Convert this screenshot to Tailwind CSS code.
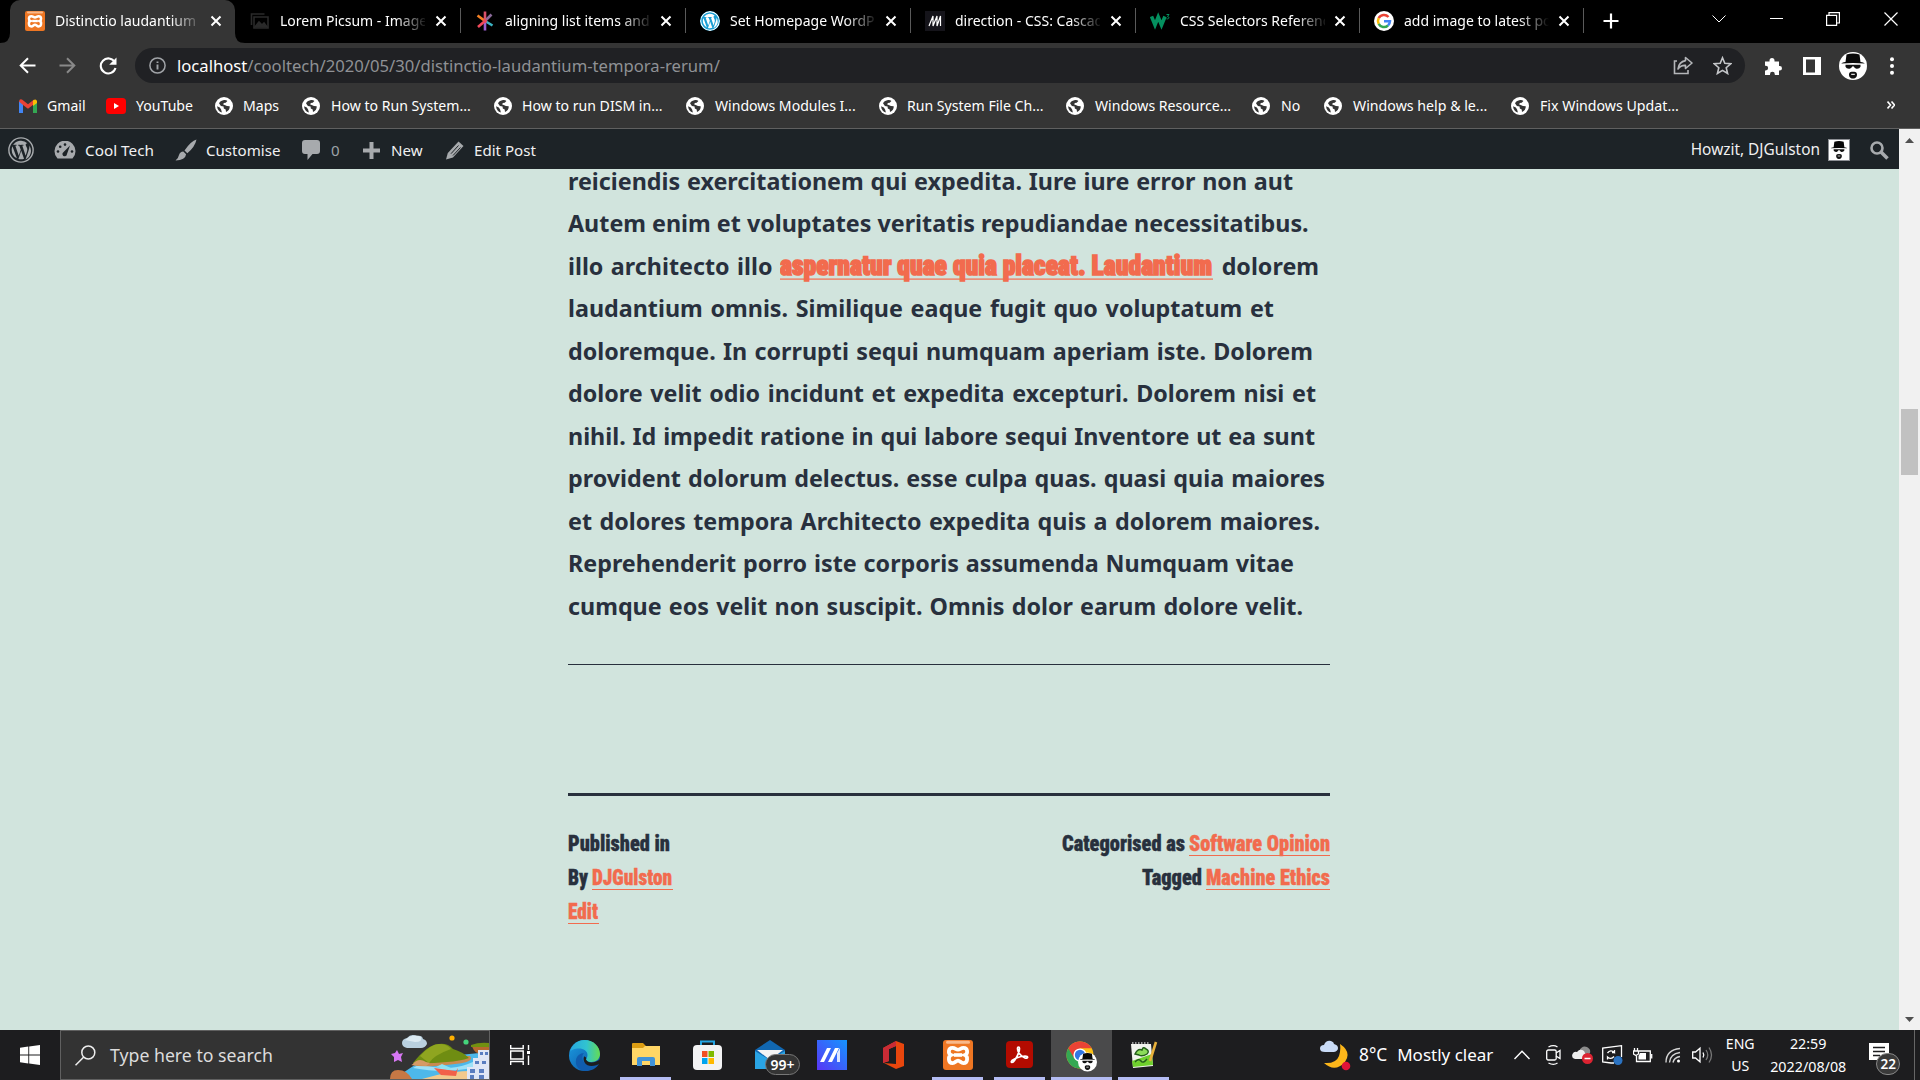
<!DOCTYPE html>
<html lang="en">
<head>
<meta charset="utf-8">
<title>Distinctio laudantium</title>
<script src="https://cdn.jsdelivr.net/npm/@tailwindcss/browser@4"></script>
</head>
<body class="h-[1080px] w-[1920px] overflow-hidden bg-black font-['Noto_Sans','Open_Sans',sans-serif] text-white">
<svg class="hidden">
  <symbol id="globe" viewBox="0 0 18 18"><circle cx="9" cy="9" r="9" fill="#fff"/><path d="M8.200 3.200c1.800-.6 3.200-.2 4.200.8l-1.700 1.700-1.900.3-.6 1.600 1.500.3 2.300 1 2.700.3c.3 2.600-1.200 4.600-3.700 5.700l-.3-2.400-1.900-.9-.2-2.100-2.700-.5L4 6.300c.8-1.700 2.300-2.700 4.200-3.100z" fill="#353535"/><path d="M2.100 9.200l2.700 1.200 1.400 2.400.7 2.600C4 14.700 2.200 12.400 2.100 9.200z" fill="#353535"/></symbol>
  <symbol id="x" viewBox="0 0 12 12"><path d="M1.500 1.500l9 9M10.500 1.500l-9 9" stroke="#fff" stroke-width="2" fill="none"/></symbol>
  <symbol id="xampp" viewBox="0 0 20 20"><rect width="20" height="20" rx="2" fill="#ee7623"/><rect x="2" y=".5" width="16" height="2" rx="1" fill="#f8b88a"/><path d="M6.400 5.200c1.700 0 2.200 1.200 3.600 1.200s1.900-1.200 3.600-1.200c3.200 0 3 4 1.100 4.800 1.900.8 2.100 5.400-1.100 5.400-1.700 0-2.200-1.700-3.600-1.700s-1.900 1.700-3.600 1.700C3.200 15.400 3.400 10.800 5.300 10 3.400 9.200 3.200 5.200 6.400 5.200z" fill="none" stroke="#fff" stroke-width="2.500"/><path d="M7.200 10h5.600" stroke="#fff" stroke-width="2.400"/></symbol>
  <symbol id="wp" viewBox="0 0 24 24"><circle cx="12" cy="12" r="11.200" fill="none" stroke="currentColor" stroke-width="1.300"/><path fill="currentColor" d="M3.400 12c0 3.400 2 6.300 4.800 7.700L4.100 8.500C3.600 9.600 3.400 10.800 3.400 12zm14.400-.4c0-1.100-.4-1.800-.7-2.400-.4-.7-.8-1.300-.8-2 0-.8.600-1.500 1.500-1.500h.1A8.600 8.600 0 0 0 4.800 7.300h.6c.9 0 2.300-.1 2.300-.1.5 0 .5.7.1.700 0 0-.5.1-1 .1l3.100 9.400 1.900-5.700L10.400 8l-.9-.1c-.5 0-.4-.7 0-.7 0 0 1.400.1 2.300.1s2.300-.1 2.300-.1c.5 0 .5.700.1.700 0 0-.5.1-1 .1l3.100 9.300.9-2.900c.4-1.200.6-2 .6-2.800zm-5.600 1.200-2.600 7.500a8.600 8.600 0 0 0 5.300-.2l-.1-.1-2.600-7.200zm7.400-4.900.1 1.200c0 1.100-.2 2.400-.9 4l-2.600 7.600A8.600 8.600 0 0 0 19.600 7.900z"/></symbol>
  <symbol id="face" viewBox="0 0 28 28"><path d="M7.500 2.500Q14 .500 20.500 2.500L21.500 10q4 .5 4 1.600Q14 10.500 2.500 11.600q0-1.100 4-1.600z" fill="#080808"/><path d="M6.500 12.800h15v1.900q-1 2.300-4 2-2.200-.4-2.600-2.300h-1.800q-.4 1.900-2.600 2.300-3 .3-4-2z" fill="#111"/><path d="M14 19.800c2.600-.6 4 .7 4 2.600s-1 4.100-4 4.100-4-2.200-4-4.100 1.400-3.200 4-2.600z" fill="#111"/><path d="M12.200 22.400h3.600" stroke="#ddd" stroke-width="1.200"/></symbol>
</svg>

<!-- Tab strip -->
<header class="flex h-[43px] items-start text-[14px]">
  <div class="flex h-[43px] w-[10px] items-end bg-black"><svg class="h-[10px] w-[10px]" viewBox="0 0 10 10"><path d="M10 0v10H0Q10 10 10 0z" fill="#353535"/></svg></div>
  <div class="flex h-[43px] w-[225px] items-center rounded-t-[10px] bg-[#353535] pb-[2px] pl-[15px]">
    <svg class="h-5 w-5"><use href="#xampp"/></svg>
    <span class="ml-[10px] w-[143px] overflow-hidden whitespace-nowrap [mask-image:linear-gradient(to_right,#000_115px,transparent_148px)]">Distinctio laudantium t</span>
    <svg class="ml-[12px] h-3 w-3"><use href="#x"/></svg>
  </div>
  <div class="relative flex h-[43px] w-[226px] items-center pb-[2px] pl-[15px]">
    <svg class="absolute bottom-0 left-0 h-[10px] w-[10px]" viewBox="0 0 10 10"><path d="M0 0v10h10Q0 10 0 0z" fill="#353535"/></svg>
    <svg class="h-5 w-5" viewBox="0 0 20 20" fill="none" stroke="#2a2a2a" stroke-width="1.600"><path d="M4 6h14v11H4zM1.500 14V3h13"/><path d="M5 16l4-5 3 3 2-2 3 4z" fill="#2a2a2a"/></svg>
    <span class="ml-[10px] w-[145px] overflow-hidden whitespace-nowrap [mask-image:linear-gradient(to_right,#000_115px,transparent_148px)]">Lorem Picsum - Images</span>
    <svg class="ml-[10px] h-3 w-3"><use href="#x"/></svg>
    <i class="ml-auto h-[25px] w-px bg-[#5a5a5a]"></i>
  </div>
  <div class="flex h-[43px] w-[225px] items-center pb-[2px] pl-[14px]">
    <svg class="h-5 w-5" viewBox="0 0 20 20" fill="none" stroke-width="2.600"><path d="M10 10V.5" stroke="#d9506a"/><path d="M10 10l6.500-6.500" stroke="#8a6a9a"/><path d="M10 10l7.500 4.500" stroke="#3bb4c4"/><path d="M10 10v9.500" stroke="#9a5fd0"/><path d="M10 10l-7 6" stroke="#f0495a"/><path d="M10 10L2.500 4.500" stroke="#f48024"/><circle cx="10" cy="10" r="2" fill="#e8465e"/></svg>
    <span class="ml-[10px] w-[145px] overflow-hidden whitespace-nowrap [mask-image:linear-gradient(to_right,#000_115px,transparent_148px)]">aligning list items and</span>
    <svg class="ml-[10px] h-3 w-3"><use href="#x"/></svg>
    <i class="ml-auto h-[25px] w-px bg-[#5a5a5a]"></i>
  </div>
  <div class="flex h-[43px] w-[225px] items-center pb-[2px] pl-[14px]">
    <svg class="h-5 w-5 rounded-full bg-[#1a9fd4]"><use href="#wp"/></svg>
    <span class="ml-[10px] w-[145px] overflow-hidden whitespace-nowrap [mask-image:linear-gradient(to_right,#000_115px,transparent_148px)]">Set Homepage WordPress</span>
    <svg class="ml-[10px] h-3 w-3"><use href="#x"/></svg>
    <i class="ml-auto h-[25px] w-px bg-[#5a5a5a]"></i>
  </div>
  <div class="flex h-[43px] w-[225px] items-center pb-[2px] pl-[14px]">
    <svg class="h-5 w-5" viewBox="0 0 20 20"><rect width="20" height="20" fill="#15141a"/><path d="M4 15 8 5v10L12 5v10L15.500 5v10" stroke="#fff" stroke-width="1.200" fill="none"/></svg>
    <span class="ml-[10px] w-[145px] overflow-hidden whitespace-nowrap [mask-image:linear-gradient(to_right,#000_115px,transparent_148px)]">direction - CSS: Cascading</span>
    <svg class="ml-[10px] h-3 w-3"><use href="#x"/></svg>
    <i class="ml-auto h-[25px] w-px bg-[#5a5a5a]"></i>
  </div>
  <div class="flex h-[43px] w-[224px] items-center pb-[2px] pl-[14px]">
    <svg class="h-5 w-5" viewBox="0 0 20 20"><path d="M1.500 5.500 5 14l3.200-8 3.300 8L15 5.500" stroke="#04905f" stroke-width="3.600" fill="none"/><path d="M16.500 3.500h2.500l-1.500 2c2 0 2 3-1 2.300" stroke="#04905f" fill="none"/></svg>
    <span class="ml-[10px] w-[145px] overflow-hidden whitespace-nowrap [mask-image:linear-gradient(to_right,#000_115px,transparent_148px)]">CSS Selectors Reference</span>
    <svg class="ml-[9px] h-3 w-3"><use href="#x"/></svg>
    <i class="ml-auto h-[25px] w-px bg-[#5a5a5a]"></i>
  </div>
  <div class="flex h-[43px] w-[224px] items-center pb-[2px] pl-[14px]">
    <svg class="h-5 w-5" viewBox="0 0 20 20" fill="none" stroke-width="2.500"><circle cx="10" cy="10" r="10" fill="#fff"/><path d="M14.500 6A6 6 0 0 0 4.700 7.200" stroke="#ea4335"/><path d="M4.700 7.200a6 6 0 0 0 0 5.600" stroke="#fbbc05"/><path d="M4.700 12.800a6 6 0 0 0 9.300 1.700" stroke="#34a853"/><path d="M14 14.500a6 6 0 0 0 2-4.200h-6" stroke="#4285f4"/></svg>
    <span class="ml-[10px] w-[145px] overflow-hidden whitespace-nowrap [mask-image:linear-gradient(to_right,#000_115px,transparent_145px)]">add image to latest post</span>
    <svg class="ml-[9px] h-3 w-3"><use href="#x"/></svg>
    <i class="ml-auto h-[25px] w-px bg-[#5a5a5a]"></i>
  </div>
  <svg class="mt-[13px] ml-[19px] h-4 w-4" viewBox="0 0 16 16"><path d="M8 .5v15M.5 8h15" stroke="#fff" stroke-width="2.200"/></svg>
  <svg class="mt-[15px] ml-[93px] h-2 w-[14px]" viewBox="0 0 14 8" fill="none" stroke="#fff"><path d="M.5.500 7 7 13.500.500"/></svg>
  <i class="mt-[18px] ml-[44px] h-px w-[13px] bg-white"></i>
  <svg class="mt-[12px] ml-[43px] h-[14px] w-[14px]" viewBox="0 0 14 14" fill="none" stroke="#fff" stroke-width="1.200"><path d="M.6 3.400h10v10H.6zM3 3V.6h10.400V11H11"/></svg>
  <svg class="mt-[12px] ml-[44px] h-[14px] w-[14px]" viewBox="0 0 14 14" stroke="#fff" stroke-width="1.200"><path d="M.5.500l13 13M13.500.500l-13 13"/></svg>
</header>

<!-- Address row -->
<div class="flex h-[45px] items-center bg-[#353535] pl-[19px]">
  <svg class="h-[17px] w-[17px]" viewBox="0 0 17 17" fill="none" stroke="#fff" stroke-width="2"><path d="M16.500 8.500H2M9 1.200 1.700 8.500 9 15.800"/></svg>
  <svg class="ml-[23px] h-[17px] w-[17px]" viewBox="0 0 17 17" fill="none" stroke="#898989" stroke-width="2"><path d="M.5 8.500H15M8 1.200l7.300 7.300L8 15.800"/></svg>
  <svg class="ml-[23px] h-[18px] w-[18px]" viewBox="0 0 18 18" fill="none" stroke="#fff" stroke-width="2.100"><path d="M15.700 5A7.500 7.500 0 1 0 16.500 11"/><path d="M17.500.500v7.300h-7.300z" fill="#fff" stroke="none"/></svg>
  <div class="ml-[18px] flex h-[35px] w-[1610px] items-center rounded-full bg-[#202124] pl-[14px]">
    <svg class="h-[17px] w-[17px]" viewBox="0 0 17 17" fill="none" stroke="#a0a3a7" stroke-width="1.500"><circle cx="8.500" cy="8.500" r="7.600"/><path d="M8.500 7.500v5M8.500 4.400v1.700" stroke-width="1.900"/></svg>
    <span class="ml-[11px] w-[546px] pt-px text-[16.65px] whitespace-nowrap text-[#8f9195]"><span class="text-white">localhost</span>/cooltech/2020/05/30/distinctio-laudantium-tempora-rerum/</span>
    <svg class="ml-[950px] h-[19px] w-[20px]" viewBox="0 0 20 19" fill="none" stroke="#b4b6b9" stroke-width="1.600"><path d="M4 5H1.500v12.500h13.500V14"/><path d="M12.500 1.500 19 7l-6.500 5.500V9.400Q8 9 5 13q.8-7.200 7.500-8.400z" stroke-linejoin="round"/></svg>
    <svg class="ml-[20px] h-[19px] w-[19px]" viewBox="0 0 19 19" fill="none" stroke="#c4c6c9" stroke-width="1.600"><path d="M9.500 1.800l2.300 5.500 5.900.5-4.500 3.900 1.400 5.800-5.100-3.100-5.100 3.100 1.400-5.800L1.300 7.800l5.900-.5z"/></svg>
  </div>
  <svg class="ml-[19px] h-[18px] w-[18px]" viewBox="0 0 18 18" fill="#fff"><path d="M1 4.500h4.500v-1a2.500 2.500 0 0 1 5 0v1H15V9h.8a2.200 2.200 0 0 1 0 4.400H15V18h-4.200v-.8a2.400 2.400 0 0 0-4.800 0v.8H1v-4.600h.8a2.300 2.300 0 0 0 0-4.600H1z"/></svg>
  <svg class="ml-[21px] h-[18px] w-[18px]" viewBox="0 0 18 18"><path fill="#fff" fill-rule="evenodd" d="M0 0h18v18H0zM3 2.500v13h9v-13z"/></svg>
  <svg class="ml-[18px] h-7 w-7 rounded-full bg-white"><use href="#face"/></svg>
  <svg class="ml-[23px] h-[18px] w-1" viewBox="0 0 4 18" fill="#fff"><circle cx="2" cy="2.200" r="2"/><circle cx="2" cy="9" r="2"/><circle cx="2" cy="15.800" r="2"/></svg>
</div>

<!-- Bookmarks -->
<nav class="flex h-[41px] items-start border-b border-[#606060] bg-[#353535] pt-[8px] pl-[19px] text-[14.1px] leading-[20px] whitespace-nowrap">
  <div class="flex w-[87px] items-center gap-[10px]"><svg class="h-[14px] w-[18px]" viewBox="0 0 18 14"><path d="M0 2v12h4V5z" fill="#4285f4"/><path d="M18 2v12h-4V5z" fill="#34a853"/><path d="M0 2.500Q.5-.5 3 .6L9 5.300 15 .6l-.8 5.200L9 9.800 4 6z" fill="#ea4335"/><path d="M14 1.500Q17-.8 18 2v2L14 7z" fill="#fbbc04"/></svg>Gmail</div>
  <div class="flex w-[109px] items-center gap-[10px]"><svg class="h-4 w-5" viewBox="0 0 20 16"><rect width="20" height="16" rx="3.500" fill="#f00"/><path d="M8 5v6l5-3z" fill="#fff"/></svg>YouTube</div>
  <div class="flex w-[87px] items-center gap-[10px]"><svg class="h-[18px] w-[18px]"><use href="#globe"/></svg>Maps</div>
  <div class="flex w-[192px] items-center gap-[11px]"><svg class="h-[18px] w-[18px]"><use href="#globe"/></svg>How to Run System...</div>
  <div class="flex w-[192px] items-center gap-[10px]"><svg class="h-[18px] w-[18px]"><use href="#globe"/></svg>How to run DISM in...</div>
  <div class="flex w-[193px] items-center gap-[11px]"><svg class="h-[18px] w-[18px]"><use href="#globe"/></svg>Windows Modules I...</div>
  <div class="flex w-[187px] items-center gap-[10px]"><svg class="h-[18px] w-[18px]"><use href="#globe"/></svg>Run System File Ch...</div>
  <div class="flex w-[186px] items-center gap-[11px]"><svg class="h-[18px] w-[18px]"><use href="#globe"/></svg>Windows Resource...</div>
  <div class="flex w-[72px] items-center gap-[11px]"><svg class="h-[18px] w-[18px]"><use href="#globe"/></svg>No</div>
  <div class="flex w-[187px] items-center gap-[11px] text-[14.2px]"><svg class="h-[18px] w-[18px]"><use href="#globe"/></svg>Windows help &amp; le...</div>
  <div class="flex w-[190px] items-center gap-[11px] text-[14.2px]"><svg class="h-[18px] w-[18px]"><use href="#globe"/></svg>Fix Windows Updat...</div>
  <svg class="mt-[5px] ml-[186px] h-2 w-2" viewBox="0 0 8 8" fill="none" stroke="#fff" stroke-width="1.600"><path d="M.5.500 3.500 4 .5 7.500M4.500.500 7.500 4l-3 3.500"/></svg>
</nav>

<div class="flex h-[901px]">
  <div class="flex w-[1899px] flex-col bg-[#d1e4dd]">
    <!-- Admin bar -->
    <div class="flex h-[40px] shrink-0 items-center bg-[#1d2327] pt-[2px] pl-[8px] text-[15.1px] text-[#f0f0f1]">
      <svg class="h-[26px] w-[26px] text-[#a7aaad]"><use href="#wp"/></svg>
      <svg class="ml-[20px] h-[18px] w-[22px]" viewBox="0 0 22 18"><path d="M3.500 17.500A10.500 10.500 0 1 1 18.500 17.500z" fill="#a7aaad"/><g fill="#1d2327"><circle cx="4" cy="10.500" r="1.300"/><circle cx="6.200" cy="5.800" r="1.300"/><circle cx="11" cy="3.600" r="1.300"/><circle cx="18" cy="10.500" r="1.300"/><path d="M16 4.500l-3 8.500a2.300 2.300 0 1 1-3.400-2z"/></g></svg>
      <span class="ml-[9px] w-[90px] text-[15.3px]">Cool Tech</span>
      <svg class="h-[24px] w-[22px]" viewBox="0 0 22 22" fill="#a7aaad"><path d="M21.500.5Q16 2 9.500 11.500l2.800 2.700Q20 8 21.500.5zM8.300 12.500l2.800 2.700Q10.500 21 .5 21.500 3.500 19 4 16q1-3.300 4.300-3.500z"/></svg>
      <span class="ml-[9px] w-[96px]">Customise</span>
      <svg class="h-5 w-[18px]" viewBox="0 0 18 20" fill="#a7aaad"><path d="M3 0h12q3 0 3 3v8q0 3-3 3h-4.500L5.500 20v-6H3q-3 0-3-3V3q0-3 3-3z"/></svg>
      <span class="ml-[11px] w-[32px] text-[#9ca2a7]">0</span>
      <svg class="h-[17px] w-[17px]" viewBox="0 0 17 17"><path d="M8.500 0v17M0 8.500h17" stroke="#a7aaad" stroke-width="4"/></svg>
      <span class="ml-[11px] w-[55px]">New</span>
      <svg class="h-[19px] w-[18px]" viewBox="0 0 18 19"><path d="M12.500.5 17.500 5 7 16.500 0 18.500 1.800 12z" fill="#a7aaad"/><path d="M12.500 4.500 5 12.700M14.500 6.500 7 14.500" stroke="#1d2327" stroke-width="1"/></svg>
      <span class="ml-[10px]">Edit Post</span>
      <span class="ml-auto text-[15.4px]">Howzit, DJGulston</span>
      <svg class="ml-[8px] h-[22px] w-[22px] border border-[#8c8f94] bg-white"><use href="#face"/></svg>
      <svg class="mr-[10px] ml-[20px] h-[19px] w-[19px]" viewBox="0 0 19 19" fill="none" stroke="#a7aaad"><circle cx="7" cy="7" r="5.500" stroke-width="2.600"/><path d="M11 11l6.500 6.500" stroke-width="3.600"/></svg>
    </div>
    <!-- Post -->
    <main class="flex grow flex-col items-center overflow-hidden text-[#28303d]">
      <article class="-mt-[9.5px] mr-[1px] w-[762px] text-[23.3px] leading-[42.5px] font-bold whitespace-nowrap">
        <p class="w-[725px] [text-align-last:justify]">reiciendis exercitationem qui expedita. Iure iure error non aut</p>
        <p class="w-[740px] [text-align-last:justify]">Autem enim et voluptates veritatis repudiandae necessitatibus.</p>
        <div class="flex h-[42.5px] w-[751px]"><span class="w-[204.5px] [text-align-last:justify]">illo architecto illo</span><a class="ml-[7px]"><svg class="h-[42px] w-[433px] font-['Roboto',sans-serif] font-black font-stretch-condensed" fill="#f26b4e"><text x="0" y="30" font-size="27.500" textLength="432" lengthAdjust="spacingAndGlyphs" stroke="#f26b4e" stroke-width="1.600">aspernatur quae quia placeat. Laudantium</text><rect y="33.500" width="433" height="1.200"/></svg></a><span class="ml-auto">dolorem</span></div>
        <p class="w-[706px] [text-align-last:justify]">laudantium omnis. Similique eaque fugit quo voluptatum et</p>
        <p class="w-[745px] [text-align-last:justify]">doloremque. In corrupti sequi numquam aperiam iste. Dolorem</p>
        <p class="w-[748px] [text-align-last:justify]">dolore velit odio incidunt et expedita excepturi. Dolorem nisi et</p>
        <p class="w-[747px] [text-align-last:justify]">nihil. Id impedit ratione in qui labore sequi Inventore ut ea sunt</p>
        <p class="w-[757px] [text-align-last:justify]">provident dolorum delectus. esse culpa quas. quasi quia maiores</p>
        <p class="w-[752px] [text-align-last:justify]">et dolores tempora Architecto expedita quis a dolorem maiores.</p>
        <p class="w-[726px] [text-align-last:justify]">Reprehenderit porro iste corporis assumenda Numquam vitae</p>
        <p class="w-[735px] [text-align-last:justify]">cumque eos velit non suscipit. Omnis dolor earum dolore velit.</p>
        <hr class="mt-[37px] border-t border-[#28303d]">
      </article>
      <footer class="mt-[128px] mr-[1px] flex w-[762px] justify-between border-t-3 border-[#28303d] pt-[32px] font-['Roboto',sans-serif] font-black font-stretch-condensed">
        <div class="flex flex-col">
          <svg class="h-[34px] w-[104px]" fill="#28303d" stroke="#28303d" stroke-width=".4" font-size="22"><text x="0" y="23" textLength="102" lengthAdjust="spacingAndGlyphs">Published in</text></svg>
          <svg class="h-[34px] w-[106px]" fill="#28303d" font-size="22"><text x="0" y="23" textLength="20" lengthAdjust="spacingAndGlyphs" stroke="#28303d" stroke-width=".4">By</text><text x="24" y="23" textLength="80" lengthAdjust="spacingAndGlyphs" fill="#f26b4e" stroke="#f26b4e" stroke-width=".4">DJGulston</text><rect x="24" y="27" width="81" height="1" fill="#f26b4e"/></svg>
          <svg class="h-[34px] w-[106px]" fill="#f26b4e" font-size="22"><text x="0" y="23" textLength="30" lengthAdjust="spacingAndGlyphs" stroke="#f26b4e" stroke-width=".4">Edit</text><rect y="27" width="31" height="1"/></svg>
        </div>
        <div class="flex flex-col">
          <svg class="h-[34px] w-[268px]" fill="#28303d" font-size="22"><text x="0" y="23" textLength="123" lengthAdjust="spacingAndGlyphs" stroke="#28303d" stroke-width=".4">Categorised as</text><text x="127" y="23" textLength="141" lengthAdjust="spacingAndGlyphs" fill="#f26b4e" stroke="#f26b4e" stroke-width=".4">Software Opinion</text><rect x="127" y="27" width="141" height="1" fill="#f26b4e"/></svg>
          <svg class="h-[34px] w-[268px]" fill="#28303d" font-size="22"><text x="80" y="23" textLength="60" lengthAdjust="spacingAndGlyphs" stroke="#28303d" stroke-width=".4">Tagged</text><text x="144" y="23" textLength="124" lengthAdjust="spacingAndGlyphs" fill="#f26b4e" stroke="#f26b4e" stroke-width=".4">Machine Ethics</text><rect x="144" y="27" width="124" height="1" fill="#f26b4e"/></svg>
        </div>
      </footer>
    </main>
  </div>
  <!-- Scrollbar -->
  <div class="flex w-[21px] flex-col items-center bg-[#f1f1f1]">
    <svg class="mt-[9px] h-[5px] w-[9px]" viewBox="0 0 9 5"><path d="M0 5 4.500 0 9 5z" fill="#505050"/></svg>
    <div class="mt-[266px] h-[66px] w-[17px] bg-[#c1c1c1]"></div>
    <svg class="mt-auto mb-[8px] h-[5px] w-[9px]" viewBox="0 0 9 5"><path d="M0 0 4.500 5 9 0z" fill="#505050"/></svg>
  </div>
</div>

<!-- Taskbar -->
<footer class="flex h-[50px] items-center bg-[#1d1d1f]">
  <svg class="ml-[20px] h-5 w-5" viewBox="0 0 20 20" fill="#fff"><path d="M0 2.700 8.300 1.600v8H0zM9.200 1.400 20 0v9.600H9.200zM0 10.400h8.300v8L0 17.300zM9.200 10.400H20V20L9.200 18.600z"/></svg>
  <div class="ml-[20px] flex h-[50px] w-[430px] items-center border border-[#606060] bg-[#333]">
    <svg class="ml-[14px] h-[21px] w-[21px]" viewBox="0 0 21 21" fill="none" stroke="#eee" stroke-width="1.500"><circle cx="13.300" cy="7.500" r="6.500"/><path d="M8.500 12.200.500 20.300"/></svg>
    <span class="ml-[14px] text-[17.7px] text-[#dcdcdc]">Type here to search</span>
    <svg class="ml-auto h-[48px] w-[100px]" viewBox="-1 1 100 48"><path d="M5 49Q25 33 40 28L99 22V49z" fill="#4db8ea"/><path d="M30 34q40 12 68-12v10q-30 14-75 6z" fill="#9ee1f7"/><path d="M32 49q30-10 67-8v8z" fill="#f2c98c"/><path d="M21 35Q50 25 80 26q5 6-15 8-30 4-44 1z" fill="#c98a50"/><path d="M23 33Q38 14 49 14q9-1 14 5 10 3 16 9-9 3-22 4-20 2-34 1z" fill="#6f8d12"/><path d="M30 26Q41 14 49 14q8 0 12 5Q44 25 39 33z" fill="#8fa520"/><path d="M22 35q6-8 14-3l4 1-4 3z" fill="#d69a66"/><path d="M82 16q8-3 17-2v12q-15-1-17-10z" fill="#b8682e"/><path d="M81 15q8-3 18-2v4H81z" fill="#729010"/><path d="M88 20h11v29H77V37h6V28h5z" fill="#dfe6f5"/><path d="M90 22h3v3h-3zM95 22h3v3h-3zM85 31h4v3h-4zM92 31h4v3h-4zM80 39h5v4h-5zM89 39h5v4h-5zM80 45h4v4h-4zM89 45h5v4h-5z" fill="#597dc0"/><path d="M44 38l22 3 2-3-2 8-15-1z" fill="#f26149"/><path d="M46 37l6-3 9 4-1 2z" fill="#8ee2f1"/><path d="M0 49q0-9 8-9 9 0 14 9z" fill="#c77845"/><path d="M17 18q-5-1-5-5t5-5q4-5 10-2 5-1 6 3 4 1 4 5-2 4-6 4z" fill="#b9d0df"/><path d="M15 10q8-7 16-3 2 5-6 5z" fill="#dceaf2"/><circle cx="62" cy="8" r="2.600" fill="#ffb000"/><circle cx="76" cy="12" r="2.600" fill="#45d57b"/><path d="M7 20l2 4 4-1-2 4 1 5-4-2-4 2 0-5-3-3 4-1z" fill="#d777f4"/></svg>
  </div>
  <svg class="ml-[20px] h-5 w-5" viewBox="0 0 20 20" fill="none" stroke="#fff" stroke-width="1.400"><path d="M.700 0v3.500h12.500V0M.700 20v-3.500h12.500V20M.700 6h12.500v8H.7zM18.500 0v5M18.500 10.500V20"/><path d="M17 6h3v3h-3z" fill="#fff" stroke="none"/></svg>
  <svg class="ml-[39px] h-[31px] w-[31px]" viewBox="0 0 31 31"><defs><linearGradient id="eg" x2="1"><stop stop-color="#27a8e0"/><stop offset=".55" stop-color="#31c3d0"/><stop offset="1" stop-color="#65dc52"/></linearGradient><linearGradient id="eb" y2="1" x2="1"><stop stop-color="#1b9de2"/><stop offset="1" stop-color="#0c4fa0"/></linearGradient></defs><circle cx="15.500" cy="15.500" r="15.500" fill="url(#eb)"/><path d="M1 12C3 4 9 0 15.500 0 25 0 31 7 31 14c0 5-4 8-8.500 8-4 0-5.500-1.500-5.500-2.500s1.500-1.500 1.500-4.500c0-4-4-6.500-8.500-6.500S2 10 1 12z" fill="url(#eg)"/><path d="M15 13c-3 3-2 10 4 12.500 4 1.500 8 .5 11-2-2 5-8 7.500-14 7.500-7-1-10-6-9-11 .6-4 4-7 8-7z" fill="#105cae"/><path d="M17 19.500c2 4 8 4 14 0v3q-3.500 3.500-8.500 3.500c-6 0-9-5-7.500-9.500 1 0 3 1 2 3z" fill="#1d1d1f"/></svg>
  <div class="ml-[20px] flex h-[50px] w-[51px] flex-col items-center"><svg class="mt-[13px] h-[24px] w-[28px]" viewBox="0 0 28 24"><path d="M0 1q0-1 1-1h10l3 3h13v5H0z" fill="#dc9d13"/><path d="M0 5h11l2-2h15v19H0z" fill="#ffd666"/><path d="M5 23V16q0-2 2-2h14q2 0 2 2v7h-5v-5h-8v5z" fill="#4193d8"/></svg><i class="mt-auto h-[3px] w-full bg-[#b4bcf3]"></i></div>
  <svg class="ml-[21px] h-[31px] w-[31px]" viewBox="0 0 31 31"><path d="M9 7V1.500h13V7" fill="none" stroke="#24a5e4" stroke-width="2"/><rect x="1" y="5" width="29" height="25" rx="4" fill="#f3f3f4"/><path d="M10 11h5.500v6H10z" fill="#f25022"/><path d="M16.500 11H22v6h-5.500z" fill="#7fba00"/><path d="M10 18h5.500v6H10z" fill="#00a4ef"/><path d="M16.500 18H22v6h-5.500z" fill="#ffb900"/></svg>
  <div class="relative ml-[32px] h-[30px] w-[46px]"><svg class="h-[29px] w-[30px]" viewBox="0 0 30 29"><path d="M0 10 15 0l15 10v18H0z" fill="#1167b1"/><path d="M2 10h26L15 20z" fill="#f4f4f4"/><path d="M0 11l15 9 15-9v18H0z" fill="#2aa4e4"/></svg><span class="absolute top-[14px] left-[10px] flex h-[21px] w-[35px] items-center justify-center rounded-full border border-[#777] bg-[#343434] text-[14px] font-semibold">99+</span></div>
  <svg class="ml-[16px] h-[30px] w-[30px]" viewBox="0 0 30 30"><defs><linearGradient id="mg" x1="0" y1="1" x2="1" y2="0"><stop stop-color="#5a35f5"/><stop offset="1" stop-color="#1495ff"/></linearGradient></defs><path d="M0 0h30v30H0z" fill="url(#mg)"/><path d="M3 22 10 8h4L7 22zM11 22 18 8h4l-7 14z" fill="#fff"/><path d="M20 13l3-5v14h-3z" fill="#dce6ff"/></svg>
  <svg class="ml-[35px] h-[28px] w-[23px]" viewBox="0 0 23 28"><path d="M1 7 14 0l8 3v22l-8 3-12-6 12 1V5L7 8v12l-6 2z" fill="#e8460d"/><path d="M1 7 14 0v5L7 8v12l-6 2z" fill="#c92b35"/></svg>
  <div class="ml-[27px] flex h-[50px] w-[51px] flex-col items-center"><svg class="mt-[10px] h-[30px] w-[30px]"><use href="#xampp"/></svg><i class="mt-auto h-[3px] w-full bg-[#b4bcf3]"></i></div>
  <div class="ml-[11px] flex h-[50px] w-[51px] flex-col items-center"><svg class="mt-[11px] h-[27px] w-[27px]" viewBox="0 0 27 27"><rect width="27" height="27" rx="4" fill="#b30b00"/><path d="M6 19.500c-2 2 .5 3 2.500 0 2-3 5-8 5-12 0-2-2-2-2 0 0 4 4 8 7.500 9.500 3 1 4-2 0-2-4 .2-9 1.500-13 4.500z" fill="none" stroke="#fff" stroke-width="1.700"/></svg><i class="mt-auto h-[3px] w-full bg-[#b4bcf3]"></i></div>
  <div class="ml-[6px] flex h-[50px] w-[61px] flex-col items-center bg-[#4a4a4b]"><svg class="mt-[10px] h-[32px] w-[31px]" viewBox="0 0 31 32"><circle cx="14" cy="15" r="13.500" fill="#fbc116"/><path d="M14 15 2.300 8.200A13.500 13.500 0 0 0 14 28.500L20 18z" fill="#34a853"/><path d="M14 8.200h11.700A13.500 13.500 0 0 0 2.300 8.200L8 18z" fill="#ea4335"/><circle cx="14" cy="15" r="6.600" fill="#fff"/><circle cx="14" cy="15" r="5.200" fill="#3277e3"/><circle cx="21.500" cy="22" r="9.500" fill="#fff"/><svg x="12" y="12" width="19" height="19"><use href="#face"/></svg></svg><i class="mt-auto h-[3px] w-full bg-[#b4bcf3]"></i></div>
  <div class="ml-[6px] flex h-[50px] w-[51px] flex-col items-center"><svg class="mt-[11px] h-[28px] w-[28px]" viewBox="0 0 28 28"><path d="M1 3h20l2 22-20 2z" fill="#f1f3ee"/><path d="M2 20 22 13 23 24 3 26z" fill="#6fd02c"/><path d="M2 2h18" stroke="#999" stroke-width="2" stroke-dasharray="1.500"/><path d="M5 13q3-6 7-4 1-4 4-1 4 2 1 5-5 3-8 1zM5 21q4-4 6-1t6-2" fill="#8cdc5a" stroke="#235d1a" stroke-width="1.400"/><path d="M26 1 20 20" stroke="#e9b13b" stroke-width="2.600"/></svg><i class="mt-auto h-[3px] w-full bg-[#b4bcf3]"></i></div>

  <svg class="ml-[151px] h-[31px] w-[31px]" viewBox="0 0 31 31"><path d="M20 4q12 8 5 18-10 11-21 1 12 1 15-7 2-6 1-12z" fill="#fcb61a"/><path d="M5 12q-5 0-5-3.500T4 5q2-5 7-4 3 1 3 3 4 1 4 4t-4 4z" fill="#c9dbf7"/><circle cx="26" cy="26" r="4.300" fill="#e01238"/></svg>
  <span class="ml-[8px] text-[17.300px] whitespace-nowrap">8°C</span><span class="ml-[10px] w-[97px] text-[17px] whitespace-nowrap">Mostly clear</span>
  <svg class="ml-[20px] h-[10px] w-4" viewBox="0 0 16 10" fill="none" stroke="#fff" stroke-width="1.400"><path d="M.500 9 8 1.200 15.500 9"/></svg>
  <svg class="ml-[16px] h-[20px] w-[15px]" viewBox="0 0 15 20" fill="none" stroke="#fff" stroke-width="1.300"><path d="M2.500 2q5-2.600 9 0M2.500 18q5 2.600 9 0M10 8l4-2.500v8L10 11"/><rect x=".700" y="5" width="9.500" height="10" rx="1.500"/></svg>
  <svg class="ml-[11px] h-[18px] w-[21px]" viewBox="0 0 21 18"><path d="M7 5q3-6 8-4 4 2 3 6l-6 6z" fill="#8c8c8c"/><path d="M3 13q-4-1-2.500-5Q2 5 5 6q3-4 7-1l4 8z" fill="#eee"/><circle cx="15.500" cy="12.500" r="5.500" fill="#dc2331"/><path d="M12.500 12.500h6" stroke="#fff" stroke-width="1.500"/></svg>
  <svg class="ml-[9px] h-[20px] w-[21px]" viewBox="0 0 21 20" fill="none" stroke="#fff" stroke-width="1.300"><path d="M12 18H9L.700 17V3L19.500.7V12"/><path d="M5.500 8q3-4 7-.5V5M12.500 7.500H10M12 11.500q-3 3.500-6.500.5V14.500"/><circle cx="16" cy="15.500" r="4.500" fill="#2b73c2" stroke="none"/></svg>
  <svg class="ml-[10px] h-[15px] w-5" viewBox="0 0 20 15" fill="none" stroke="#fff" stroke-width="1.300"><path d="M6 3h11.300v10.500H3.500V8M18.700 6v4.500M1.500 0v3M4.500 0v3"/><path d="M.500 3h5v3L3 7.500.500 6z"/><path d="M7 5h6v6.500H5.500V8z" fill="#fff" stroke="none"/></svg>
  <svg class="ml-[12px] h-[16px] w-[16px]" viewBox="0 0 16 16" fill="none" stroke="#d5d5d5" stroke-width="1.400"><path d="M1 15.500Q1 3 15 1.500M4.500 15.500Q5 7 15 5.500M8 15.500Q9 10.500 15 9.500"/><circle cx="13.500" cy="14" r="1.500" fill="#fff" stroke="none"/></svg>
  <svg class="ml-[11px] h-[18px] w-[21px]" viewBox="0 0 21 18" fill="none" stroke="#fff" stroke-width="1.300"><path d="M.700 6H3.500L8 2.200v13.600L3.500 12H.7z"/><path d="M11 6.500q1.600 2.500 0 5"/><path d="M14 4q3.500 5 0 10M17 1.500q5 7.500 0 15" stroke="#777"/></svg>
  <div class="ml-[10px] flex w-[34px] flex-col items-center text-[14.1px] leading-[22px]"><span>ENG</span><span>US</span></div>
  <div class="ml-[11px] flex w-[80px] flex-col items-center text-[14.3px] leading-[23px]"><span>22:59</span><span>2022/08/08</span></div>
  <div class="relative ml-[21px] h-[24px] w-[34px]"><svg class="h-[21px] w-5" viewBox="0 0 20 21"><path d="M0 0h20v17h-8l-4 4v-4H0z" fill="#fff"/><path d="M4 4.500h12M4 8.500h12M4 12.500h7" stroke="#1d1d1f" stroke-width="1.300"/></svg><span class="absolute top-[10px] left-[7px] flex h-[22px] w-[24px] items-center justify-center rounded-full border border-[#888] bg-[#3a3a3a] text-[13.5px] font-semibold">22</span></div>
  <i class="ml-auto h-[50px] w-[6px] border-l border-[#666]"></i>
</footer>
</body>
</html>
